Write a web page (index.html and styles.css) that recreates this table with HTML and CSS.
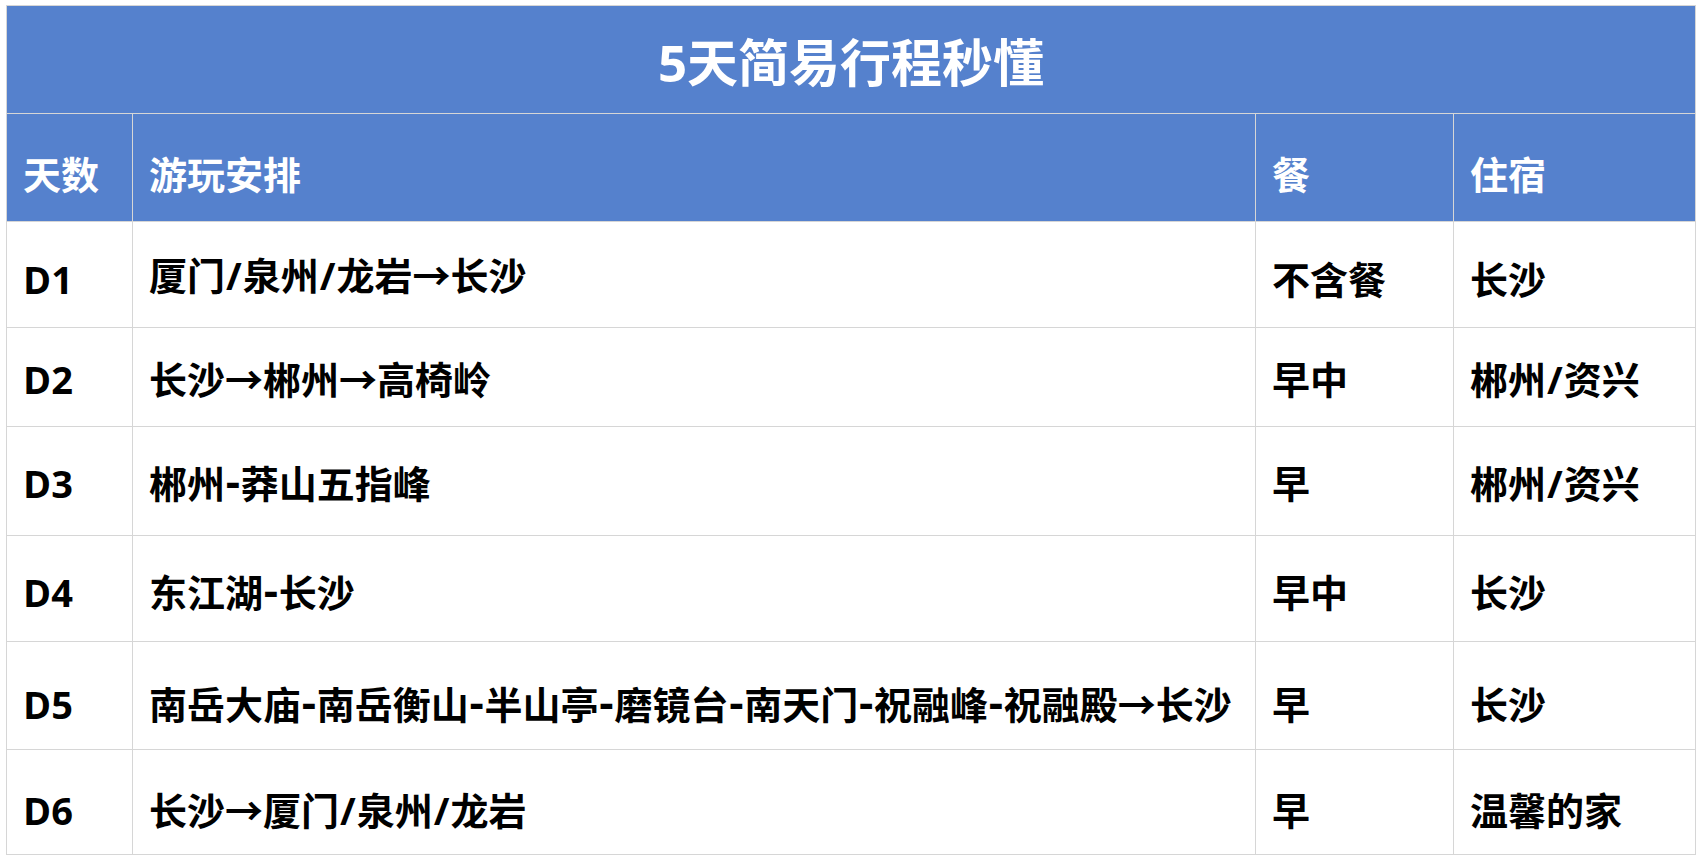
FILE: index.html
```html
<!DOCTYPE html>
<html lang="zh-CN">
<head>
<meta charset="utf-8">
<title>5天简易行程秒懂</title>
<link rel="stylesheet" href="styles.css">
</head>
<body>
<div class="sheet">
  <div class="title">5天简易行程秒懂</div>

  <div class="row head">
    <div class="cell">天数</div>
    <div class="cell">游玩安排</div>
    <div class="cell">餐</div>
    <div class="cell">住宿</div>
  </div>

  <div class="row r1">
    <div class="cell">D1</div>
    <div class="cell route">厦门<span class="slash">/</span>泉州<span class="slash">/</span>龙岩→长沙</div>
    <div class="cell">不含餐</div>
    <div class="cell">长沙</div>
  </div>

  <div class="row r2">
    <div class="cell">D2</div>
    <div class="cell">长沙→郴州→高椅岭</div>
    <div class="cell">早中</div>
    <div class="cell">郴州<span class="slash">/</span>资兴</div>
  </div>

  <div class="row r3">
    <div class="cell">D3</div>
    <div class="cell">郴州<span class="dash">-</span>莽山五指峰</div>
    <div class="cell">早</div>
    <div class="cell">郴州<span class="slash">/</span>资兴</div>
  </div>

  <div class="row r4">
    <div class="cell">D4</div>
    <div class="cell">东江湖<span class="dash">-</span>长沙</div>
    <div class="cell">早中</div>
    <div class="cell">长沙</div>
  </div>

  <div class="row r5">
    <div class="cell">D5</div>
    <div class="cell">南岳大庙<span class="dash">-</span>南岳衡山<span class="dash">-</span>半山亭<span class="dash">-</span>磨镜台<span class="dash">-</span>南天门<span class="dash">-</span>祝融峰<span class="dash">-</span>祝融殿→长沙</div>
    <div class="cell">早</div>
    <div class="cell">长沙</div>
  </div>

  <div class="row r6">
    <div class="cell">D6</div>
    <div class="cell">长沙→厦门<span class="slash">/</span>泉州<span class="slash">/</span>龙岩</div>
    <div class="cell">早</div>
    <div class="cell">温馨的家</div>
  </div>
</div>
</body>
</html>
```

FILE: styles.css
```css
html, body {
  margin: 0;
  padding: 0;
  background: #ffffff;
}

body {
  padding: 5px 0 0 6px;
  font-family: "Open Sans", "Noto Sans CJK SC", sans-serif;
  font-weight: 700;
  color: #000000;
}

.sheet {
  display: grid;
  width: 1690px;
  box-sizing: border-box;
  grid-template-columns: 125px 1122px 197px 241px;
  grid-template-rows: 107px 107px 105px 98px 108px 105px 107px 104px;
  gap: 1px;
  padding: 1px;
  background: #d6d6d6;
}

.row {
  display: contents;
}

.title {
  grid-column: 1 / -1;
  background: #5581cd;
  color: #ffffff;
  font-size: 51px;
  line-height: 1.2;
  display: flex;
  align-items: center;
  justify-content: center;
  padding-top: 6px;
  box-sizing: border-box;
}

.cell {
  background: #ffffff;
  display: flex;
  align-items: center;
  padding: 8px 0 0 16px;
  box-sizing: border-box;
  font-size: 38px;
  line-height: 1.2;
  white-space: nowrap;
}

.dash {
  font-family: "DejaVu Sans", sans-serif;
  font-weight: 700;
}

.slash {
  margin: 0 1px;
}

.head .cell {
  background: #5581cd;
  color: #ffffff;
  padding-top: 14px;
}

.r1 .cell { padding-top: 10px; }
.r1 .route { padding-top: 2px; }
.r2 .cell { padding-top: 6px; }
.r3 .cell { padding-top: 6px; }
.r4 .cell { padding-top: 8px; }
.r5 .cell { padding-top: 18px; }
.r6 .cell { padding-top: 18px; }
```
